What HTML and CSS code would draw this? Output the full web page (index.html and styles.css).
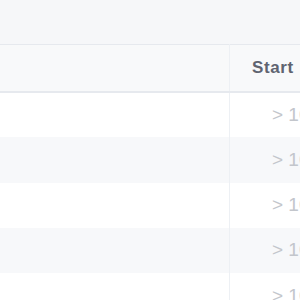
FILE: index.html
```html
<!DOCTYPE html>
<html>
<head>
<meta charset="utf-8">
<link rel="stylesheet" href="styles.css">
</head>
<body>
<div class="page">
  <table class="grid">
    <thead>
      <tr><th class="c1"></th><th class="c2">Start</th></tr>
    </thead>
    <tbody>
      <tr><td class="c1"></td><td class="c2 val">&gt; 10</td></tr>
      <tr class="alt"><td class="c1"></td><td class="c2 val">&gt; 10</td></tr>
      <tr><td class="c1"></td><td class="c2 val">&gt; 10</td></tr>
      <tr class="alt"><td class="c1"></td><td class="c2 val">&gt; 10</td></tr>
      <tr><td class="c1"></td><td class="c2 val">&gt; 10</td></tr>
    </tbody>
  </table>
</div>
</body>
</html>
```
FILE: styles.css
```css
html, body {
  margin: 0;
  padding: 0;
  width: 300px;
  height: 300px;
  overflow: hidden;
  background: #f6f7f9;
  font-family: "Liberation Sans", Arial, sans-serif;
}
.page {
  padding-top: 44px;
  width: 420px;
}
.grid {
  width: 420px;
  border-collapse: collapse;
  table-layout: fixed;
  border-top: 1px solid #e6e9ee;
}
.grid th, .grid td {
  padding: 0;
  text-align: left;
}
.grid .c1 { width: 229px; border-right: 1px solid #edf0f4; }
.grid thead th {
  height: 46px;
  background: #f8f9fa;
  border-bottom: 2px solid #e6e9ee;
  font-size: 17px;
  font-weight: bold;
  color: #5f6470;
  letter-spacing: 0.6px;
}
.grid thead .c2 { padding-left: 22px; }
.grid tbody td {
  height: 45.25px;
  background: #ffffff;
  box-sizing: border-box;
}
.grid tbody tr.alt td { background: #f7f8fa; }
.grid .val {
  padding-left: 42px;
  font-size: 19px;
  color: #c3c6cc;
}
```
